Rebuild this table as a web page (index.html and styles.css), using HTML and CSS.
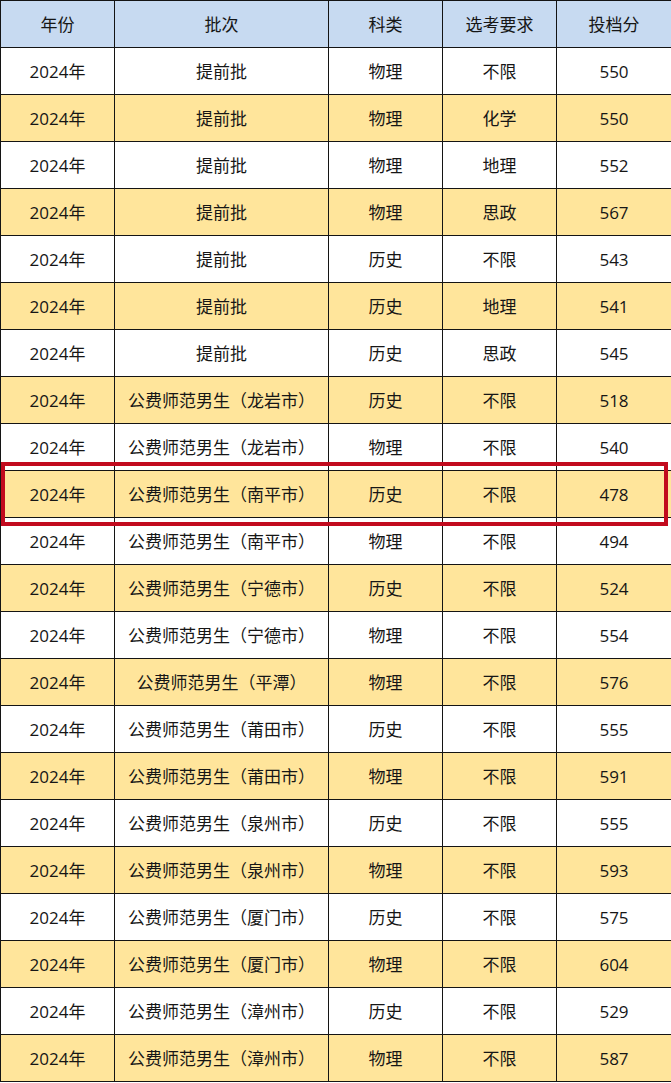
FILE: index.html
```html
<!DOCTYPE html>
<html lang="zh-CN">
<head>
<meta charset="utf-8">
<title>投档分</title>
<link rel="stylesheet" href="styles.css">
</head>
<body>
<div class="wrap">
<table class="score">
<colgroup><col class="c1"><col class="c2"><col class="c3"><col class="c4"><col class="c5"></colgroup>
<thead>
<tr><th>年份</th><th>批次</th><th>科类</th><th>选考要求</th><th>投档分</th></tr>
</thead>
<tbody>
<tr><td>2024年</td><td>提前批</td><td>物理</td><td>不限</td><td>550</td></tr>
<tr class="y"><td>2024年</td><td>提前批</td><td>物理</td><td>化学</td><td>550</td></tr>
<tr><td>2024年</td><td>提前批</td><td>物理</td><td>地理</td><td>552</td></tr>
<tr class="y"><td>2024年</td><td>提前批</td><td>物理</td><td>思政</td><td>567</td></tr>
<tr><td>2024年</td><td>提前批</td><td>历史</td><td>不限</td><td>543</td></tr>
<tr class="y"><td>2024年</td><td>提前批</td><td>历史</td><td>地理</td><td>541</td></tr>
<tr><td>2024年</td><td>提前批</td><td>历史</td><td>思政</td><td>545</td></tr>
<tr class="y"><td>2024年</td><td>公费师范男生（龙岩市）</td><td>历史</td><td>不限</td><td>518</td></tr>
<tr><td>2024年</td><td>公费师范男生（龙岩市）</td><td>物理</td><td>不限</td><td>540</td></tr>
<tr class="y"><td>2024年</td><td>公费师范男生（南平市）</td><td>历史</td><td>不限</td><td>478</td></tr>
<tr><td>2024年</td><td>公费师范男生（南平市）</td><td>物理</td><td>不限</td><td>494</td></tr>
<tr class="y"><td>2024年</td><td>公费师范男生（宁德市）</td><td>历史</td><td>不限</td><td>524</td></tr>
<tr><td>2024年</td><td>公费师范男生（宁德市）</td><td>物理</td><td>不限</td><td>554</td></tr>
<tr class="y"><td>2024年</td><td>公费师范男生（平潭）</td><td>物理</td><td>不限</td><td>576</td></tr>
<tr><td>2024年</td><td>公费师范男生（莆田市）</td><td>历史</td><td>不限</td><td>555</td></tr>
<tr class="y"><td>2024年</td><td>公费师范男生（莆田市）</td><td>物理</td><td>不限</td><td>591</td></tr>
<tr><td>2024年</td><td>公费师范男生（泉州市）</td><td>历史</td><td>不限</td><td>555</td></tr>
<tr class="y"><td>2024年</td><td>公费师范男生（泉州市）</td><td>物理</td><td>不限</td><td>593</td></tr>
<tr><td>2024年</td><td>公费师范男生（厦门市）</td><td>历史</td><td>不限</td><td>575</td></tr>
<tr class="y"><td>2024年</td><td>公费师范男生（厦门市）</td><td>物理</td><td>不限</td><td>604</td></tr>
<tr><td>2024年</td><td>公费师范男生（漳州市）</td><td>历史</td><td>不限</td><td>529</td></tr>
<tr class="y"><td>2024年</td><td>公费师范男生（漳州市）</td><td>物理</td><td>不限</td><td>587</td></tr>
</tbody>
</table>
<div class="mark"></div>
</div>
</body>
</html>
```
FILE: styles.css
```css
html, body {
  margin: 0;
  padding: 0;
  background: #ffffff;
}
.wrap {
  position: relative;
  width: 671px;
}
.score {
  width: 671px;
  table-layout: fixed;
  border-collapse: collapse;
  font-family: "Open Sans", "Noto Sans CJK SC", sans-serif;
  font-size: 17px;
  color: #161616;
}
.c1 { width: 114px; }
.c2 { width: 214px; }
.c3 { width: 114px; }
.c4 { width: 114px; }
.c5 { width: 115px; }
.score th,
.score td {
  height: 47px;
  padding: 1px 0 0 0;
  border: 1px solid #141414;
  text-align: center;
  vertical-align: middle;
  font-weight: normal;
  line-height: 1;
  box-sizing: border-box;
}
.score thead th {
  background: #c7daf1;
}
.score tr.y td {
  background: #ffe59b;
}
.mark {
  position: absolute;
  left: 1px;
  top: 462px;
  width: 667px;
  height: 64px;
  border: 4px solid #c20a1e;
  box-sizing: border-box;
  pointer-events: none;
}
```
